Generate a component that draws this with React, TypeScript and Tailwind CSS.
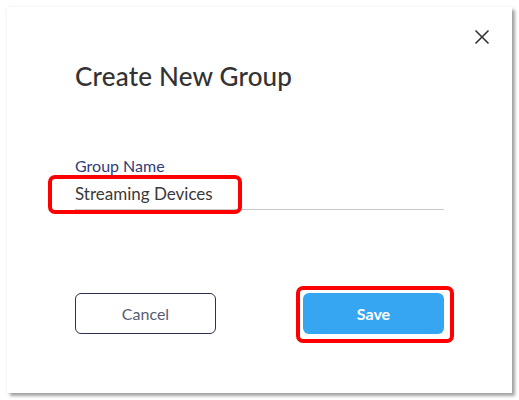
import React from 'react';

const App: React.FC = () => {
  return (
    <div className="w-[519px] h-[400px] bg-white pt-[7px] pl-[7px]" style={{ fontFamily: 'Lato, "Open Sans", sans-serif' }}>
      <div className="w-[505px] h-[386px] bg-white shadow-[0_0_3px_rgba(0,0,0,0.08),3px_3px_3px_rgba(0,0,0,0.35)] flex flex-col">
        {/* Close */}
        <div className="flex justify-end pt-[22px] pr-[22px] h-[44px]">
          <button className="w-[16px] h-[16px] text-[#333]" aria-label="Close">
            <svg viewBox="0 0 16 16" width="16" height="16" fill="none" stroke="currentColor" strokeWidth="1.6">
              <path d="M1.5 1.5 L14.5 14.5 M14.5 1.5 L1.5 14.5" />
            </svg>
          </button>
        </div>

        <div className="px-[68px] flex flex-col">
          <h2 className="mt-[9px] text-[26px] leading-[32px] font-medium text-[#333333] tracking-[0.2px]">Create New Group</h2>

          {/* Field */}
          <div className="mt-[65px] flex flex-col">
            <label className="text-[16px] leading-[18px] text-[#2f3d7a]">Group Name</label>
            <div className="relative mt-[9px] border-b border-[#c8c8c8] h-[26px]">
              <span className="block text-[17px] leading-[20px] text-[#3a3a3a]">Streaming Devices</span>
              <div className="absolute -left-[27px] -top-[9px] w-[194px] h-[39px] border-4 border-[#ff0000] rounded-[7px]" />
            </div>
          </div>

          {/* Buttons */}
          <div className="mt-[83px] flex justify-between">
            <button className="w-[141px] h-[41px] border border-[#2d3050] rounded-[6px] text-[16px] text-[#575c75]">
              Cancel
            </button>
            <div className="relative">
              <button className="w-[141px] h-[41px] bg-[#37a6f2] rounded-[6px] text-[16px] font-bold text-white">
                Save
              </button>
              <div className="absolute -left-[7px] -top-[7px] w-[158px] h-[57px] border-4 border-[#ff0000] rounded-[7px]" />
            </div>
          </div>
        </div>
      </div>
    </div>
  );
};

export default App;
